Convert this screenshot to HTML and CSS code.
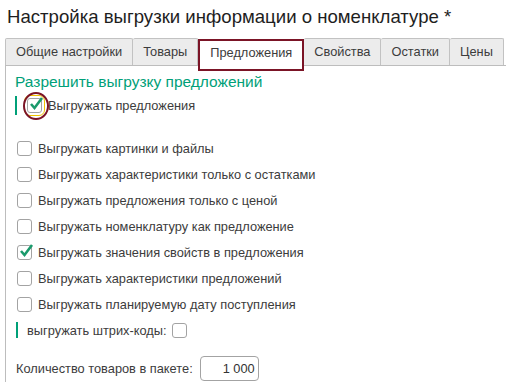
FILE: index.html
```html
<!DOCTYPE html>
<html>
<head>
    <title>Настройка выгрузки информации о номенклатуре</title>
    <meta charset="UTF-8">
    <link rel="stylesheet" href="styles.css">
</head>
<body>
    <h1 class="title">Настройка выгрузки информации о номенклатуре *</h1>
    <div class="tabs">
        <div class="tab">Общие настройки</div>
        <div class="tab">Товары</div>
        <div class="tab active">Предложения</div>
        <div class="tab">Свойства</div>
        <div class="tab">Остатки</div>
        <div class="tab">Цены</div>
    </div>
    <div class="panel">
        <div class="group-title">Разрешить выгрузку предложений</div>
        <div class="row main-row">
            <span class="bar"></span>
            <span class="check focused">
                <svg viewBox="0 0 16 16"><polyline points="3,8 6.5,12 14,2"/></svg>
            </span>
            <span class="label">Выгружать предложения</span>
            <span class="mark"></span>
        </div>
        <div class="options">
            <div class="row"><span class="check"></span><span class="label">Выгружать картинки и файлы</span></div>
            <div class="row"><span class="check"></span><span class="label">Выгружать характеристики только с остатками</span></div>
            <div class="row"><span class="check"></span><span class="label">Выгружать предложения только с ценой</span></div>
            <div class="row"><span class="check"></span><span class="label">Выгружать номенклатуру как предложение</span></div>
            <div class="row">
                <span class="check">
                    <svg viewBox="0 0 16 16"><polyline points="3,8 6.5,12 14,2"/></svg>
                </span>
                <span class="label">Выгружать значения свойств в предложения</span>
            </div>
            <div class="row"><span class="check"></span><span class="label">Выгружать характеристики предложений</span></div>
            <div class="row"><span class="check"></span><span class="label">Выгружать планируемую дату поступления</span></div>
            <div class="row barcode-row">
                <span class="bar"></span>
                <span class="label">выгружать штрих-коды:</span>
                <span class="check"></span>
            </div>
        </div>
        <div class="row amount-row">
            <span class="label">Количество товаров в пакете:</span>
            <span class="field">1 000</span>
        </div>
    </div>
</body>
</html>
```

FILE: styles.css
```css
body {
    font-family: "Liberation Sans", Arial, sans-serif;
    background-color: #fff;
    margin: 0;
    color: #3c3c3c;
}
.title {
    margin: 0;
    padding: 6px 0 0 7px;
    font-size: 18.6px;
    line-height: 22px;
    font-weight: normal;
    color: #1e1e1e;
}
.tabs {
    display: flex;
    align-items: flex-start;
    height: 27px;
    margin: 10px 0 0 5px;
    border-bottom: 1px solid #bdbdbd;
}
.tab {
    box-sizing: border-box;
    flex-shrink: 0;
    white-space: nowrap;
    height: 27px;
    line-height: 25px;
    padding: 0 10px;
    font-size: 12.8px;
    background: #ececec;
    border: 1px solid #c2c2c2;
    border-bottom: none;
    border-left: none;
    border-radius: 2px 2px 0 0;
}
.tab:first-child {
    border-left: 1px solid #c2c2c2;
}
.tab.active {
    height: 32px;
    margin-top: 1px;
    line-height: 24px;
    background: #fff;
    border: 2px solid #7b1426;
    border-radius: 0;
    position: relative;
}
.panel {
    margin-left: 5px;
    border-left: 1px solid #bdbdbd;
    padding: 6px 0 0 9px;
    height: 310px;
}
.group-title {
    font-size: 15.5px;
    line-height: 20px;
    color: #00a078;
}
.row {
    display: flex;
    align-items: center;
    height: 26px;
    font-size: 12.8px;
    position: relative;
}
.main-row {
    height: 22px;
    margin-top: 2px;
}
.options {
    margin-top: 19px;
    padding-left: 2px;
}
.bar {
    width: 2px;
    height: 19px;
    background: #00a078;
    margin-right: 8px;
}
.barcode-row .bar {
    height: 16px;
    margin: 0 9px 0 -1px;
}
.check {
    box-sizing: border-box;
    width: 15px;
    height: 15px;
    border: 1px solid #a3a3a3;
    border-radius: 3px;
    background: #fff;
    margin-right: 6px;
    position: relative;
    flex-shrink: 0;
}
.barcode-row .check {
    margin-left: 5px;
}
.check svg {
    position: absolute;
    left: 0;
    top: -3px;
    width: 16px;
    height: 16px;
    overflow: visible;
}
.check polyline {
    fill: none;
    stroke: #1a9a6c;
    stroke-width: 2.6;
}
.check.focused {
    margin-left: 2px;
    margin-right: 6px;
    outline: 1px solid #f0c400;
    outline-offset: 2px;
}
.mark {
    position: absolute;
    left: 8px;
    top: -2px;
    width: 22px;
    height: 24px;
    border: 2px solid #7b1426;
    border-radius: 50%;
}
.amount-row {
    margin-top: 12px;
    padding-left: 1px;
}
.field {
    box-sizing: border-box;
    width: 59px;
    height: 25px;
    margin-left: 7px;
    border: 1px solid #a3a3a3;
    border-radius: 4px;
    line-height: 23px;
    text-align: right;
    padding-right: 3px;
    color: #333;
}
```
